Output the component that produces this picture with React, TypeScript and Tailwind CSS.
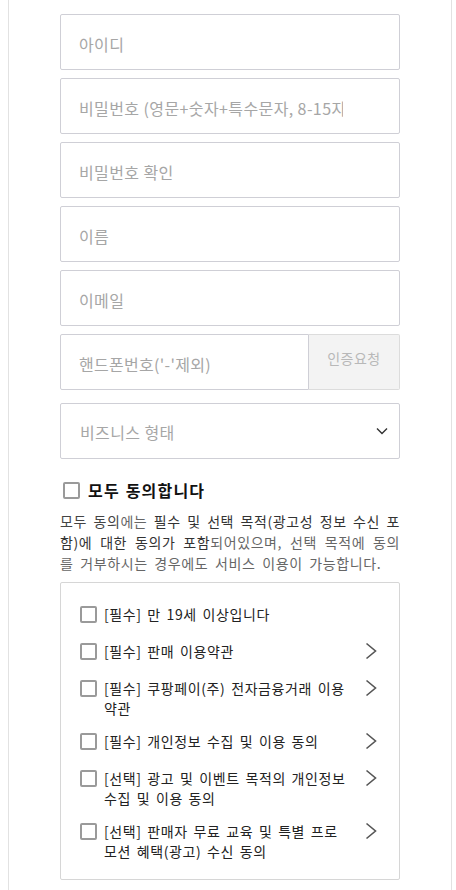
import React from "react";

const font = { fontFamily: '"Noto Sans CJK KR", "Noto Sans", sans-serif' };

function Field({ placeholder, narrow }: { placeholder: string; narrow?: boolean }) {
  return (
    <input
      type="text"
      placeholder={placeholder}
      className={
        "block h-[56px] w-full rounded-[2px] border border-[#cfcfd6] bg-white pl-[18px] pt-[4px] text-[16px] tracking-[0.4px] text-[#333] outline-none placeholder:text-[#a6a6a6] " +
        (narrow ? "pr-[56px]" : "pr-[18px]")
      }
    />
  );
}

function Box() {
  return <span className="block h-[17px] w-[17px] shrink-0 rounded-[2px] border-2 border-[#9a9a9a] bg-white" />;
}

function Chevron() {
  return (
    <svg width="12" height="18" viewBox="0 0 12 18" className="block shrink-0">
      <path d="M1.5 1.5 L10.5 9 L1.5 16.5" fill="none" stroke="#555" strokeWidth="1.6" />
    </svg>
  );
}

const terms: { lines: string[]; arrow: boolean }[] = [
  { lines: ["[필수] 만 19세 이상입니다"], arrow: false },
  { lines: ["[필수] 판매 이용약관"], arrow: true },
  { lines: ["[필수] 쿠팡페이(주) 전자금융거래 이용", "약관"], arrow: true },
  { lines: ["[필수] 개인정보 수집 및 이용 동의"], arrow: true },
  { lines: ["[선택] 광고 및 이벤트 목적의 개인정보", "수집 및 이용 동의"], arrow: true },
  { lines: ["[선택] 판매자 무료 교육 및 특별 프로", "모션 혜택(광고) 수신 동의"], arrow: true },
];

export default function App() {
  return (
    <div className="min-h-[890px] bg-white" style={font}>
      <div className="ml-[8px] min-h-[890px] w-[444px] border-x border-[#e2e2e2] px-[51px] pt-[14px]">
        <div className="flex flex-col gap-[8px]">
          <Field placeholder="아이디" />
          <Field placeholder="비밀번호 (영문+숫자+특수문자, 8-15자)" narrow />
          <Field placeholder="비밀번호 확인" />
          <Field placeholder="이름" />
          <Field placeholder="이메일" />
          <div className="flex h-[56px]">
            <input
              type="text"
              placeholder="핸드폰번호('-'제외)"
              className="h-full min-w-0 flex-1 rounded-l-[2px] border border-[#cfcfd6] bg-white pl-[18px] pt-[4px] text-[16px] tracking-[0.3px] outline-none placeholder:text-[#a6a6a6]"
            />
            <button className="h-full w-[91px] rounded-r-[2px] border border-l-0 border-[#dcdcdc] bg-[#f3f3f3] pb-[8px] text-[14px] tracking-[0.5px] text-[#b8b8b8]">
              인증요청
            </button>
          </div>
        </div>

        <div className="mt-[13px] flex h-[56px] items-center justify-between rounded-[2px] border border-[#cfcfd6] pl-[19px] pr-[11px]">
          <span className="pt-[2px] text-[16px] tracking-[0.4px] text-[#a6a6a6]">비즈니스 형태</span>
          <svg width="12" height="8" viewBox="0 0 12 8" className="block">
            <path d="M1 1.5 L6 6.5 L11 1.5" fill="none" stroke="#333" strokeWidth="1.4" />
          </svg>
        </div>

        <div className="mt-[21px] flex items-center gap-[8px] pl-[3px]">
          <Box />
          <span className="text-[16px] font-bold leading-[20px] tracking-[1.2px] text-[#111] [word-spacing:1px]">
            모두 동의합니다
          </span>
        </div>

        <div className="mt-[11px] text-[14px] leading-[21px] tracking-[0.6px] text-[#666]">
          <span className="block whitespace-nowrap [text-align-last:justify]">
            <span className="text-[#444]">모두 동의</span>에는 <span className="text-[#333]">필수 및 선택 목적(광고성 정보 수신 포</span>
          </span>
          <span className="block whitespace-nowrap [text-align-last:justify]">
            <span className="text-[#333]">함)에 대한 동의가 포함</span>되어있으며, 선택 목적에 동의
          </span>
          <span className="block whitespace-nowrap [word-spacing:3px]">를 거부하시는 경우에도 서비스 이용이 가능합니다.</span>
        </div>

        <div className="mt-[8px] flex flex-col gap-[13px] rounded-[2px] border border-[#d6d6d6] pb-[18px] pl-[19px] pr-[22px] pt-[21px]">
          {terms.map((t) => (
            <div key={t.lines[0]} className="flex min-h-[24px] items-start">
              <div className="pt-[2px]">
                <Box />
              </div>
              <div className="ml-[7px] w-[250px] text-[14px] leading-[20px] tracking-[0.6px] text-[#222] [word-spacing:2px]">
                {t.lines.map((l) => (
                  <div key={l} className="whitespace-nowrap">
                    {l}
                  </div>
                ))}
              </div>
              {t.arrow && (
                <div className="ml-auto pt-[1px]">
                  <Chevron />
                </div>
              )}
            </div>
          ))}
        </div>
      </div>
    </div>
  );
}
